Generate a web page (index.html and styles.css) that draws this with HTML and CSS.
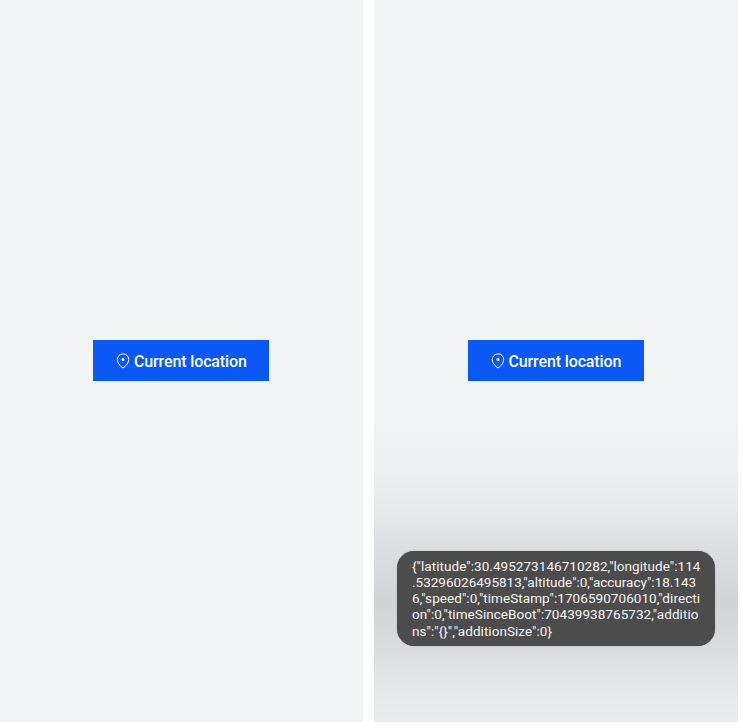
FILE: index.html
```html
<!DOCTYPE html>
<html lang="en">
<head>
<meta charset="utf-8">
<title>Current location</title>
<link rel="stylesheet" href="styles.css">
</head>
<body>
<main class="screens">
  <section class="screen">
    <button class="location-button">
      <svg class="pin" viewBox="0 0 14 16"><path d="M7 .9C3.6.9 1.3 3.3 1.3 6.5c0 3.3 2.3 5.9 4.7 7.9q1 .8 2 0c2.4-2 4.700-4.600 4.700-7.900C12.700 3.300 10.400.9 7 .9Z"/><circle cx="7" cy="6.500" r="1.500"/></svg>
      <span class="label">Current location</span>
    </button>
  </section>
  <section class="screen screen-toast">
    <button class="location-button">
      <svg class="pin" viewBox="0 0 14 16"><path d="M7 .9C3.6.9 1.3 3.3 1.3 6.5c0 3.3 2.3 5.9 4.7 7.9q1 .8 2 0c2.4-2 4.700-4.600 4.700-7.900C12.700 3.300 10.400.9 7 .9Z"/><circle cx="7" cy="6.500" r="1.500"/></svg>
      <span class="label">Current location</span>
    </button>
    <div class="toast">
      <div class="line l1">{"latitude":30.495273146710282,"longitude":114</div>
      <div class="line l2">.53296026495813,"altitude":0,"accuracy":18.143</div>
      <div class="line l3">6,"speed":0,"timeStamp":1706590706010,"directi</div>
      <div class="line l4">on":0,"timeSinceBoot":70439938765732,"additio</div>
      <div class="line l5">ns":"{}","additionSize":0}</div>
    </div>
  </section>
</main>
</body>
</html>
```
FILE: styles.css
```css
* { box-sizing: border-box; }
body { margin: 0; background: #fff; overflow: hidden; font-family: Roboto, sans-serif; }
.screens { display: grid; grid-template-columns: 363px 364px; gap: 11px; height: 722px; }
.screen { position: relative; background: #f1f3f5; display: flex; flex-direction: column; align-items: center; padding-top: 340px; }
.screen-toast {
  background: linear-gradient(#f1f3f5 0, #f1f3f5 420px, #eeeff1 470px, #e9eaec 500px, #e2e3e5 530px, #dadbde 560px, #d1d3d5 600px, #d6d7d9 630px, #dddee0 655px, #e4e5e7 680px, #ebecee 722px);
  box-shadow: 0 2px #fafafa;
}
.location-button {
  display: flex; align-items: center; flex: none;
  width: 176px; height: 41px; margin-right: 1px; padding: 0 0 0 23px; gap: 4px;
  border: 0; background: #0a59f7; color: #fff;
  font: 500 16px/20px Roboto, sans-serif; letter-spacing: -0.130px; white-space: nowrap;
}
.label { padding-top: 2px; }
.pin { width: 14px; height: 16px; flex: none; fill: none; stroke: #fff; stroke-width: 1; }
.pin circle { fill: #fff; stroke: none; }
.toast {
  width: 318px; height: 95px; margin-top: 170px; padding: 6.700px 15px; flex: none;
  border-radius: 17px; background: #4c4c4c; color: #f5f5f5;
  box-shadow: 0 0 1px #777;
  font-size: 13.500px; line-height: 16.200px; white-space: nowrap;
}
.l1 { letter-spacing: 0.055px; }
.l3 { letter-spacing: 0.065px; }
.l4 { letter-spacing: 0.055px; }
.l5 { letter-spacing: 0.050px; }
```
